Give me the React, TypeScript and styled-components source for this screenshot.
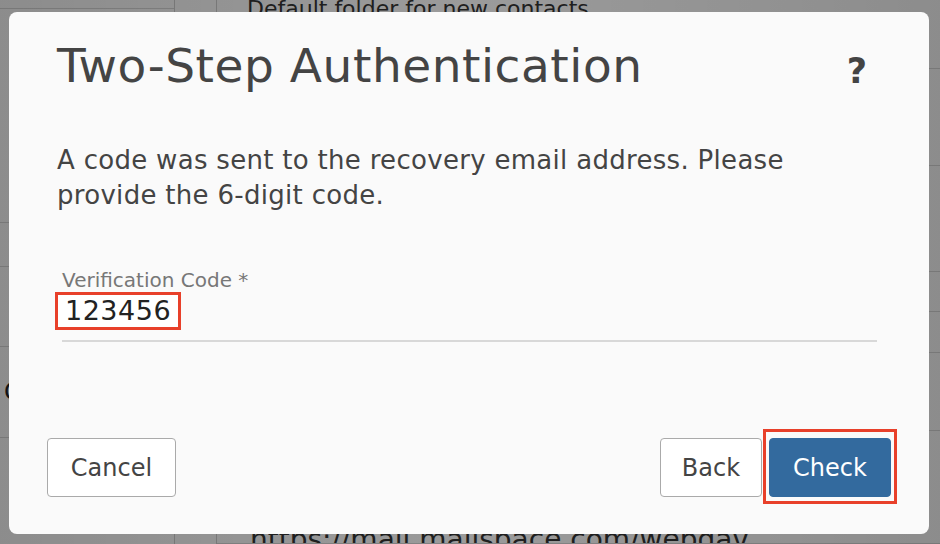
import React from "react";
import styled, { createGlobalStyle } from "styled-components";

const Global = createGlobalStyle`
  html, body { margin: 0; padding: 0; width: 940px; height: 544px; overflow: hidden; }
  body { font-family: "DejaVu Sans", "Liberation Sans", sans-serif; }
  #root { width: 940px; height: 544px; }
`;

const Page = styled.div`
  position: relative;
  width: 940px;
  height: 544px;
  display: grid;
  grid-template-columns: 175px 42px 1fr;
  background: #fafafa;
  overflow: hidden;
`;

const Sidebar = styled.div`
  display: flex;
  flex-direction: column;
  border-right: 1px solid #ccc;
`;

const SideRow = styled.div<{ $h: number }>`
  height: ${(p) => p.$h}px;
  flex: none;
  border-bottom: 1px solid #d5d5d5;
  font-size: 24px;
  color: #222;
  display: flex;
  align-items: center;
  padding-left: 4px;
`;

const ListCol = styled.div`
  border-right: 1px solid #ccc;
`;

const Content = styled.div`
  display: flex;
  flex-direction: column;
  font-size: 22px;
  color: #333;
`;

const ContentRow = styled.div<{ $h?: number }>`
  height: ${(p) => (p.$h ? `${p.$h}px` : "auto")};
  flex: ${(p) => (p.$h ? "none" : "1")};
  border-bottom: 1px solid #d5d5d5;
  padding-left: 30px;
  display: flex;
  align-items: flex-end;
  overflow: hidden;
`;

const ContentLine = styled.div`
  line-height: 30px;
  align-self: flex-start;
  margin-top: -6px;
`;

const ContentBottom = styled.div`
  line-height: 30px;
  margin-bottom: -12px;
  font-size: 28px;
  padding-left: 3px;
`;

const Overlay = styled.div`
  position: absolute;
  inset: 0;
  background: linear-gradient(90deg, rgba(0,0,0,0.44), rgba(0,0,0,0.38) 50%, rgba(0,0,0,0.44));
  display: flex;
  align-items: flex-start;
  padding: 12px 0 0 9px;
`;

const Dialog = styled.div`
  width: 920px;
  height: 522px;
  box-sizing: border-box;
  background: #fafafa;
  border-radius: 8px;
  display: flex;
  flex-direction: column;
  padding: 26px 32px 37px 38px;
  color: #444;
`;

const Header = styled.div`
  display: flex;
  align-items: flex-start;
  justify-content: space-between;
  padding-left: 10px;
  padding-right: 30px;
`;

const Title = styled.h1`
  margin: 0;
  font-weight: normal;
  font-size: 47px;
  line-height: 56px;
  color: #444;
  letter-spacing: 0.55px;
`;

const Help = styled.span`
  font-size: 35px;
  line-height: 40px;
  font-weight: bold;
  color: #444;
  margin-top: 13px;
`;

const Body = styled.p`
  margin: 49px 0 0 10px;
  font-size: 26px;
  line-height: 35px;
  letter-spacing: 0.3px;
  color: #444;
  width: 760px;
`;

const Field = styled.div`
  margin: 55px 20px 0 15px;
  display: flex;
  flex-direction: column;
  border-bottom: 2px solid #d8d8d8;
  padding-bottom: 10px;
`;

const Label = styled.label`
  font-size: 20px;
  color: #777;
  line-height: 24px;
`;

const Value = styled.span`
  align-self: flex-start;
  margin-left: -7px;
  font-size: 27px;
  line-height: 30px;
  color: #222;
  padding: 1px 7px;
  letter-spacing: 0.5px;
  background: #fff;
  border: 3px solid #e8402a;
`;

const Footer = styled.div`
  margin-top: auto;
  display: flex;
  align-items: center;
`;

const Spacer = styled.div`
  flex: 1;
`;

const Button = styled.button<{ $primary?: boolean; $w: number }>`
  width: ${(p) => p.$w}px;
  height: 59px;
  box-sizing: border-box;
  border-radius: 4px;
  font-family: inherit;
  font-size: 24px;
  cursor: pointer;
  border: 1px solid ${(p) => (p.$primary ? "#336a9e" : "#aaa")};
  background: ${(p) => (p.$primary ? "#336a9e" : "#fff")};
  color: ${(p) => (p.$primary ? "#fff" : "#444")};
`;

const Highlight = styled.div`
  border: 3px solid #e8402a;
  padding: 6px 3px 4px;
  display: flex;
  margin: -9px 0 -7px 1px;
`;

export default function App() {
  return (
    <>
      <Global />
      <Page>
        <Sidebar>
          <SideRow $h={8} />
          <SideRow $h={213} />
          <SideRow $h={43} />
          <SideRow $h={79} />
          <SideRow $h={90}>C</SideRow>
        </Sidebar>
        <ListCol />
        <Content>
          <ContentRow $h={68}>
            <ContentLine>Default folder for new contacts</ContentLine>
          </ContentRow>
          <ContentRow $h={96} />
          <ContentRow $h={105} />
          <ContentRow $h={39} />
          <ContentRow $h={40} />
          <ContentRow $h={77} />
          <ContentRow>
            <ContentBottom>https://mail.mailspace.com/webdav</ContentBottom>
          </ContentRow>
        </Content>
        <Overlay>
          <Dialog role="dialog">
            <Header>
              <Title>Two-Step Authentication</Title>
              <Help>?</Help>
            </Header>
            <Body>
              A code was sent to the recovery email address. Please provide the 6-digit code.
            </Body>
            <Field>
              <Label>Verification Code *</Label>
              <Value>123456</Value>
            </Field>
            <Footer>
              <Button $w={129}>Cancel</Button>
              <Spacer />
              <Button $w={102}>Back</Button>
              <Highlight>
                <Button $primary $w={122}>Check</Button>
              </Highlight>
            </Footer>
          </Dialog>
        </Overlay>
      </Page>
    </>
  );
}
